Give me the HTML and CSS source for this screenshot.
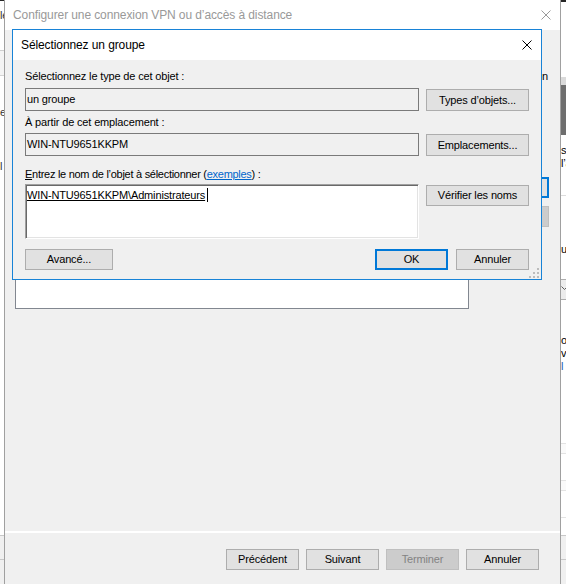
FILE: index.html
```html
<!DOCTYPE html>
<html lang="fr">
<head>
<meta charset="utf-8">
<title>Sélectionnez un groupe</title>
<link rel="stylesheet" href="styles.css">
</head>
<body>
<div class="desktop">

  <!-- console window behind, left edge -->
  <div class="peek peek-left">
    <div class="peek-line pl-first">le</div>
    <div class="peek-line pl-second">er</div>
    <div class="peek-line pl-third">l</div>
  </div>

  <!-- wizard window -->
  <div class="wizard">
    <div class="wizard-titlebar">
      <span class="wizard-title">Configurer une connexion VPN ou d’accès à distance</span>
      <svg class="close close-inactive" viewBox="0 0 10 10"><path d="M0.5 0.5L9.5 9.5M9.5 0.5L0.5 9.5"/></svg>
    </div>
    <div class="wizard-body">
      <div class="wizard-intro">connexion</div>
      <div class="wizard-row">
        <div class="listbox"></div>
        <div class="wizard-side">
          <button class="btn btn-default" aria-label="Ajouter"></button>
          <button class="btn btn-disabled" aria-label="Supprimer" disabled></button>
        </div>
      </div>
    </div>
    <div class="wizard-footer">
      <button class="btn btn-nav">Précédent</button>
      <button class="btn btn-nav">Suivant</button>
      <button class="btn btn-nav btn-disabled" disabled>Terminer</button>
      <button class="btn btn-nav">Annuler</button>
    </div>
  </div>

  <!-- console window behind, right edge -->
  <div class="peek peek-right">
    <div class="peek-line pr-s">s</div>
    <div class="peek-line">l’a</div>
    <div class="peek-line pr-u">u</div>
    <svg class="pr-chevron" viewBox="0 0 7 4"><path d="M0.5 0.5L3.5 3.5L6.5 0.5"/></svg>
    <div class="peek-line pr-oc">oc</div>
    <div class="peek-line">ve</div>
    <div class="peek-line pr-link">l</div>
  </div>

  <!-- object picker dialog -->
  <div class="dialog" role="dialog" aria-label="Sélectionnez un groupe">
    <div class="dialog-titlebar">
      <span class="dialog-title">Sélectionnez un groupe</span>
      <svg class="close" viewBox="0 0 10 10"><path d="M0.5 0.5L9.5 9.5M9.5 0.5L0.5 9.5"/></svg>
    </div>
    <div class="dialog-body">
      <div class="field-label fl-type">Sélectionnez le type de cet objet :</div>
      <div class="field-row fr-type">
        <div class="textbox">un groupe</div>
        <button class="btn btn-side">Types d’objets...</button>
      </div>

      <div class="field-label fl-loc">À partir de cet emplacement :</div>
      <div class="field-row fr-loc">
        <div class="textbox">WIN-NTU9651KKPM</div>
        <button class="btn btn-side">Emplacements...</button>
      </div>

      <div class="field-label fl-name"><span class="accel">E</span>ntrez le nom de l’objet à sélectionner (<a class="link" href="#">exemples</a>) :</div>
      <div class="field-row fr-name">
        <div class="textarea"><span class="resolved">WIN-NTU9651KKPM\Administrateurs</span><span class="caret"></span></div>
        <button class="btn btn-side btn-check">Vérifier les noms</button>
      </div>

      <div class="action-row">
        <button class="btn btn-adv">Avancé...</button>
        <span class="spacer"></span>
        <button class="btn btn-default btn-action">OK</button>
        <button class="btn btn-action">Annuler</button>
      </div>

      <svg class="grip" viewBox="0 0 10 10">
        <rect x="8" y="0" width="2" height="2"/>
        <rect x="4" y="4" width="2" height="2"/>
        <rect x="8" y="4" width="2" height="2"/>
        <rect x="0" y="8" width="2" height="2"/>
        <rect x="4" y="8" width="2" height="2"/>
        <rect x="8" y="8" width="2" height="2"/>
      </svg>
    </div>
  </div>

</div>
</body>
</html>
```

FILE: styles.css
```css
* {
  box-sizing: border-box;
}

html,
body {
  margin: 0;
  padding: 0;
}

body {
  width: 566px;
  height: 584px;
  overflow: hidden;
  background: #f0f0f0;
  font-family: "Liberation Sans", Arial, sans-serif;
  font-size: 11px;
  letter-spacing: -0.15px;
  color: #000;
}

.desktop {
  position: relative;
  display: grid;
  grid-template-columns: 4px 557px 5px;
  height: 584px;
}

/* ---------- windows peeking out behind the wizard ---------- */

.peek {
  overflow: hidden;
  white-space: nowrap;
  line-height: 13px;
  height: 584px;
}

.peek-line {
  height: 13px;
}

.peek-left {
  background: linear-gradient(
    to bottom,
    #262626 0, #262626 1px,
    #ffffff 1px, #ffffff 50px,
    #cfcfcf 50px, #cfcfcf 51px,
    #f4f4f4 51px, #f4f4f4 75px,
    #d4d4d4 75px, #d4d4d4 76px,
    #ffffff 76px, #ffffff 535px,
    #c8c8c8 535px, #c8c8c8 536px,
    #f0f0f0 536px, #f0f0f0 559px,
    #c8c8c8 559px, #c8c8c8 560px,
    #f0f0f0 560px
  );
  color: #333;
}

.pl-first {
  margin-top: 9px;
}

.pl-second {
  margin-top: 84px;
}

.pl-third {
  margin-top: 41px;
}

.peek-right {
  background: linear-gradient(
    to bottom,
    #262626 0, #262626 2px,
    #ffffff 2px, #ffffff 77px,
    #dadada 77px, #dadada 85px,
    #6e6e6e 85px, #6e6e6e 135px,
    #ffffff 135px, #ffffff 195px,
    #dcdcdc 195px, #dcdcdc 196px,
    #ffffff 196px, #ffffff 279px,
    #adadad 279px, #adadad 280px,
    #ececec 280px, #ececec 299px,
    #adadad 299px, #adadad 300px,
    #ffffff 300px, #ffffff 443px,
    #e3e3e3 443px, #e3e3e3 444px,
    #fafafa 444px, #fafafa 453px,
    #e3e3e3 453px, #e3e3e3 454px,
    #ffffff 454px, #ffffff 480px,
    #e3e3e3 480px, #e3e3e3 481px,
    #fafafa 481px, #fafafa 490px,
    #e3e3e3 490px, #e3e3e3 491px,
    #ffffff 491px, #ffffff 517px,
    #e3e3e3 517px, #e3e3e3 518px,
    #ffffff 518px, #ffffff 535px,
    #c8c8c8 535px, #c8c8c8 536px,
    #f0f0f0 536px, #f0f0f0 559px,
    #c8c8c8 559px, #c8c8c8 560px,
    #f0f0f0 560px
  );
}

.pr-s {
  margin-top: 144px;
}

.pr-u {
  margin-top: 73px;
}

.pr-chevron {
  display: block;
  width: 7px;
  height: 4px;
  margin-top: 30px;
  fill: none;
  stroke: #606060;
  stroke-width: 1;
}

.pr-oc {
  margin-top: 44px;
}

.pr-link {
  color: #1a5fb4;
}

/* ---------- shared controls ---------- */

.close {
  flex: none;
  width: 10px;
  height: 10px;
  fill: none;
  stroke: #000;
  stroke-width: 1;
}

.close-inactive {
  stroke: #9a9a9a;
}

.btn {
  flex: none;
  height: 21px;
  margin: 0;
  padding: 0;
  border: 1px solid #adadad;
  background: #e1e1e1;
  font-family: inherit;
  font-size: 11px;
  letter-spacing: -0.15px;
  color: #000;
  line-height: 19px;
  text-align: center;
  white-space: nowrap;
}

.btn-default {
  border: 2px solid #0078d7;
  line-height: 17px;
}

.btn-disabled {
  background: #cccccc;
  border-color: #bfbfbf;
  color: #838383;
}

/* ---------- wizard window ---------- */

.wizard {
  display: flex;
  flex-direction: column;
  height: 584px;
  border-left: 1px solid #a0a0a0;
  border-right: 1px solid #a0a0a0;
  background: #f0f0f0;
}

.wizard-titlebar {
  flex: none;
  height: 30px;
  display: flex;
  align-items: center;
  padding: 0 9px 1px 8px;
  background: #fff;
}

.wizard-title {
  flex: 1;
  font-size: 12px;
  letter-spacing: -0.1px;
  color: #999;
  white-space: nowrap;
}

.wizard-body {
  flex: none;
  height: 501px;
  padding: 40px 11px 0 10px;
}

.wizard-intro {
  height: 13px;
  line-height: 13px;
  padding-right: 1px;
  text-align: right;
  white-space: nowrap;
  overflow: hidden;
}

.wizard-row {
  display: grid;
  grid-template-columns: 454px 73px;
  column-gap: 7px;
  margin-top: 94px;
}

.listbox {
  height: 132px;
  border: 1px solid #828790;
  background: #fff;
}

.wizard-side {
  display: flex;
  flex-direction: column;
  gap: 8px;
}

.wizard-footer {
  flex: 1;
  display: flex;
  justify-content: flex-end;
  gap: 7px;
  padding: 16px 21px 0 0;
  border-top: 2px solid #fff;
}

.btn-nav {
  width: 73px;
}

/* ---------- object picker dialog ---------- */

.dialog {
  position: absolute;
  left: 12px;
  top: 29px;
  width: 530px;
  height: 251px;
  display: flex;
  flex-direction: column;
  border: 1px solid #1883d7;
  background: #f0f0f0;
}

.dialog-titlebar {
  flex: none;
  height: 30px;
  display: flex;
  align-items: center;
  padding: 0 9px 0 8px;
  background: #fff;
}

.dialog-title {
  flex: 1;
  font-size: 12px;
  letter-spacing: -0.1px;
}

.dialog-body {
  position: relative;
  flex: 1;
  display: flex;
  flex-direction: column;
  padding: 10px 12px 0 12px;
}

.field-label {
  flex: none;
  height: 13px;
  line-height: 13px;
  white-space: nowrap;
}

.fl-loc {
  margin-top: 5px;
}

.fl-name {
  margin-top: 12px;
  letter-spacing: -0.28px;
}

.accel {
  text-decoration: underline;
}

.link {
  color: #0066cc;
  text-decoration: underline;
}

.field-row {
  flex: none;
  display: flex;
  align-items: flex-start;
  gap: 7px;
}

.fr-type {
  margin-top: 5px;
}

.fr-loc {
  margin-top: 4px;
}

.fr-name {
  margin-top: 3px;
}

.textbox {
  width: 394px;
  height: 23px;
  padding-left: 1px;
  border: 1px solid #7a7a7a;
  background: #f0f0f0;
  line-height: 21px;
  white-space: nowrap;
}

.textarea {
  width: 394px;
  height: 55px;
  padding: 3px 0 0 1px;
  border: 1px solid;
  border-color: #a0a0a0 #ffffff #ffffff #a0a0a0;
  box-shadow: inset 1px 1px 0 #696969, inset -1px -1px 0 #e3e3e3;
  background: #fff;
  line-height: 13px;
  white-space: nowrap;
}

.resolved {
  text-decoration: underline;
}

.caret {
  display: inline-block;
  width: 1px;
  height: 14px;
  margin-left: 2px;
  vertical-align: -3px;
  background: #000;
}

.btn-side {
  width: 103px;
  height: 22px;
  margin-top: 1px;
  line-height: 20px;
}

.btn-check {
  height: 21px;
  line-height: 19px;
}

.action-row {
  flex: none;
  display: flex;
  gap: 8px;
  margin-top: 10px;
}

.spacer {
  flex: 1;
}

.btn-adv {
  width: 88px;
}

.btn-action {
  width: 73px;
}

.grip {
  position: absolute;
  right: 2px;
  bottom: 1px;
  width: 10px;
  height: 10px;
  fill: #bcbcbc;
}
```
